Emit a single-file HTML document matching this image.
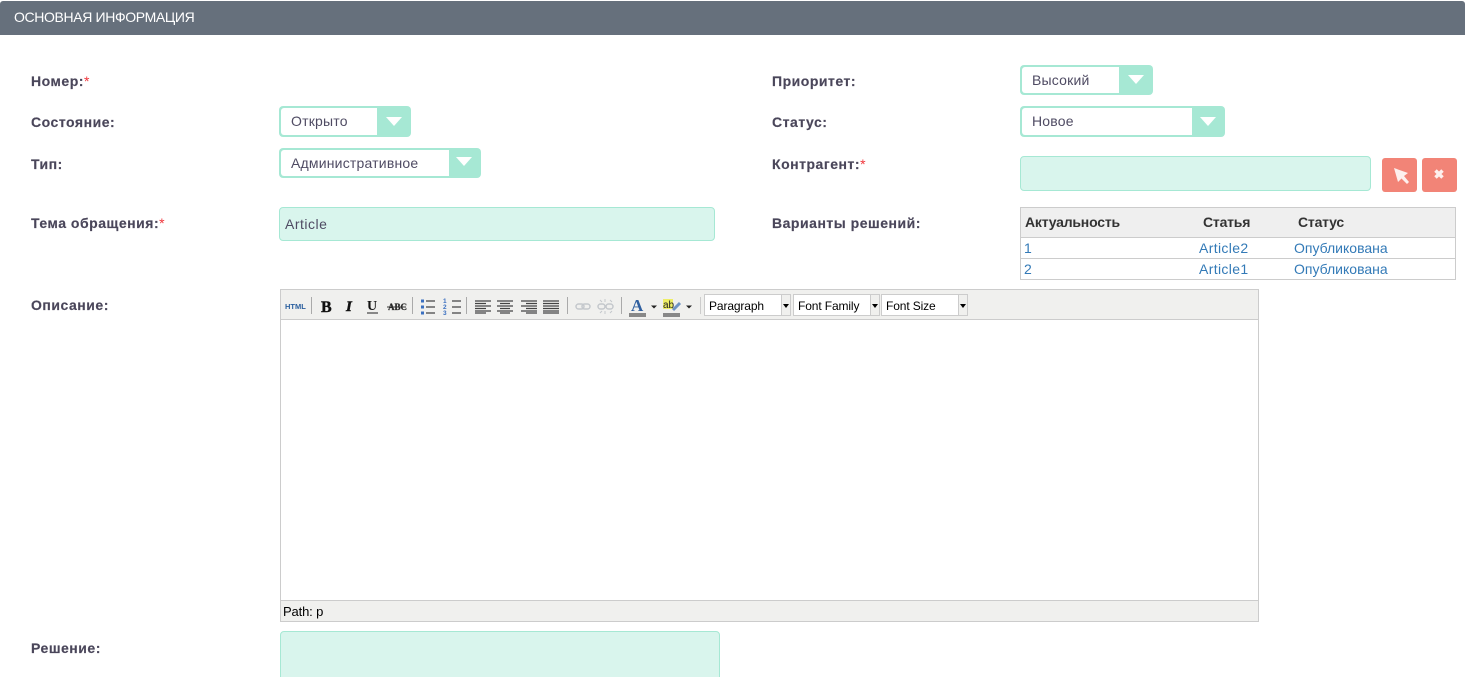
<!DOCTYPE html>
<html lang="ru"><head><meta charset="utf-8"><title>Основная информация</title>
<style>
html,body{margin:0;padding:0;background:#fff;width:1465px;height:677px;overflow:hidden}
body{position:relative;font-family:"Liberation Sans",sans-serif;font-size:14px;color:#4f4b63}
.a{position:absolute;white-space:nowrap}
.hd{left:0;top:1px;width:1465px;height:34px;background:#66707c;color:#fff;font-size:14px;line-height:33px;border-radius:3px 3px 0 0}
.hd span{margin-left:14px;letter-spacing:-.36px}
.l{font-weight:bold;font-size:14px;line-height:18px;color:#4a465a;letter-spacing:.52px;margin-top:-1px;-webkit-text-stroke:.15px #4a465a}
.l i{font-style:normal;font-weight:normal;color:#f0353b;-webkit-text-stroke:0}
.sel{box-sizing:border-box;background:#a6e8d4;border-radius:4px;height:31px}
.sel .in{position:absolute;left:2px;top:2px;bottom:2px;background:#fff;border-radius:3px 0 0 3px;line-height:26px;padding-left:10px;color:#4f4b63;letter-spacing:.2px}
.sel .ar{position:absolute;width:0;height:0;border-left:8px solid transparent;border-right:8px solid transparent;border-top:9px solid #fff;top:11px}
.inp{box-sizing:border-box;background:#d9f5ed;border:1px solid #a6e8d4;border-radius:4px}
.btn{background:#f28477;border-radius:3px;width:35px;height:34px;top:158px}
.tb{left:1020px;top:207px;width:436px;height:73px;box-sizing:border-box;border:1px solid #ccc}
.tb .h{position:absolute;left:0;top:0;right:0;height:30px;background:#efefef;border-bottom:1px solid #ccc;box-sizing:border-box}
.tb .r{position:absolute;left:0;right:0;height:1px;background:#ccc;top:50px}
.th{font-weight:bold;color:#333;line-height:18px;font-size:14px;letter-spacing:-.2px}
.td{color:#337ab7;line-height:18px;font-size:14px}
.ed{left:280px;top:289px;width:979px;height:333px;box-sizing:border-box;border:1px solid #ccc;background:#fff}
.tool{position:absolute;left:0;top:0;right:0;height:30px;background:#f0f0ee;border-bottom:1px solid #ccc;box-sizing:border-box}
.foot{position:absolute;left:0;right:0;bottom:0;height:21px;background:#f0f0ee;border-top:1px solid #ccc;box-sizing:border-box;font-size:13px;line-height:22px;color:#000;padding-left:2px;letter-spacing:-.15px}
.ms{position:absolute;top:4px;height:22px;box-sizing:border-box;background:#fff;border:1px solid #ccc;font-size:12px;line-height:23px;color:#000;padding-left:4px;letter-spacing:-.12px}
.ms b{position:absolute;right:0;top:0;bottom:0;width:8px;background:#f0f0ee;border-left:1px solid #ccc}
.ms b:after{content:"";position:absolute;left:1px;top:9px;border-left:3px solid transparent;border-right:3px solid transparent;border-top:4px solid #000}
</style></head><body>
<div class="a hd"><span>ОСНОВНАЯ ИНФОРМАЦИЯ</span></div>

<div class="a l" style="left:31px;top:73px">Номер:<i>*</i></div>
<div class="a l" style="left:31px;top:114px">Состояние:</div>
<div class="a l" style="left:31px;top:156px">Тип:</div>
<div class="a l" style="left:31px;top:215px">Тема обращения:<i>*</i></div>
<div class="a l" style="left:31px;top:297px">Описание:</div>
<div class="a l" style="left:31px;top:640px">Решение:</div>
<div class="a l" style="left:772px;top:73px">Приоритет:</div>
<div class="a l" style="left:772px;top:114px">Статус:</div>
<div class="a l" style="left:772px;top:156px">Контрагент:<i>*</i></div>
<div class="a l" style="left:772px;top:215px">Варианты решений:</div>

<div class="a sel" style="left:279px;top:106px;width:132px"><div class="in" style="width:86px">Открыто</div><div class="ar" style="left:107px"></div></div>
<div class="a sel" style="left:279px;top:148px;width:202px;height:30px"><div class="in" style="width:158px">Административное</div><div class="ar" style="left:177px;top:9px"></div></div>
<div class="a sel" style="left:1020px;top:65px;width:133px;height:30px"><div class="in" style="width:87px">Высокий</div><div class="ar" style="left:108px;top:10px"></div></div>
<div class="a sel" style="left:1020px;top:106px;width:205px"><div class="in" style="width:160px">Новое</div><div class="ar" style="left:180px"></div></div>

<div class="a inp" style="left:279px;top:207px;width:436px;height:34px;line-height:33px;padding-left:5px;letter-spacing:.5px">Article</div>
<div class="a inp" style="left:1020px;top:156px;width:351px;height:35px"></div>
<div class="a inp" style="left:280px;top:631px;width:440px;height:60px"></div>

<div class="a btn" style="left:1382px"><svg width="35" height="34"><path d="M12 10 L26 15 L22 18 L27 24 L25 26 L19.500 20.500 L16 24 Z" fill="#fdf0ee"/></svg></div>
<div class="a btn" style="left:1422px"><svg width="35" height="34"><path d="M13.500 12.500 L20.500 19.500 M20.500 12.500 L13.500 19.500" stroke="#fdf0ee" stroke-width="3.500"/></svg></div>

<div class="a tb"><div class="h"></div><div class="r"></div></div>
<div class="a th" style="left:1025px;top:213px">Актуальность</div>
<div class="a th" style="left:1203px;top:213px">Статья</div>
<div class="a th" style="left:1298px;top:213px">Статус</div>
<div class="a td" style="left:1024px;top:239px">1</div>
<div class="a td" style="left:1199px;top:239px;letter-spacing:.35px">Article2</div>
<div class="a td" style="left:1294px;top:239px">Опубликована</div>
<div class="a td" style="left:1024px;top:260px">2</div>
<div class="a td" style="left:1199px;top:260px;letter-spacing:.35px">Article1</div>
<div class="a td" style="left:1294px;top:260px">Опубликована</div>

<div class="a ed">
<div class="tool">
<svg width="430" height="30" style="position:absolute;left:0;top:0" font-family="Liberation Sans, sans-serif">
<text x="4" y="19" font-size="7.500" font-weight="bold" fill="#2b5f9e">HTML</text>
<path d="M30.500 7V24M131.500 7V24M185.500 7V24M286.500 7V24M340.500 7V24" stroke="#aaa"/>
<text x="40" y="22" font-size="16" font-weight="bold" font-family="Liberation Serif, serif" fill="#111" stroke="#111" stroke-width=".4">B</text>
<text x="65" y="21" font-size="15" font-weight="bold" font-style="italic" font-family="Liberation Serif, serif" fill="#111" stroke="#111" stroke-width=".5">I</text>
<text x="86" y="20" font-size="14" font-weight="bold" font-family="Liberation Serif, serif" fill="#111">U</text>
<path d="M86 23H97" stroke="#666" stroke-width="1.500"/>
<text x="107" y="20" font-size="9" font-weight="bold" font-family="Liberation Serif, serif" fill="#222" stroke="#222" stroke-width=".2">ABC</text>
<path d="M106 17H125" stroke="#333"/>
<path d="M140 11h3M140 17h3M140 23h3" stroke="#3a6fc0" stroke-width="3"/>
<path d="M145 11h9M145 17h9M145 23h9M171 11h9M171 17h9M171 23h9" stroke="#444" stroke-width="1.300"/>
<text x="162" y="13" font-size="6.500" font-weight="bold" fill="#3a6fc0">1</text><text x="162" y="19" font-size="6.500" font-weight="bold" fill="#3a6fc0">2</text><text x="162" y="25" font-size="6.500" font-weight="bold" fill="#3a6fc0">3</text>
<g stroke="#444" stroke-width="1.300">
<path d="M194 11h16M194 13.500h11M194 16h16M194 18.500h11M194 21h16M194 23h11"/>
<path d="M216 11h16M219 13.500h10M216 16h16M219 18.500h10M216 21h16M219 23h10"/>
<path d="M240 11h16M245 13.500h11M240 16h16M245 18.500h11M240 21h16M245 23h11"/>
<path d="M262 11h16M262 13.500h16M262 16h16M262 18.500h16M262 21h16M262 23h16"/>
</g>
<rect x="295" y="14" width="8" height="5" rx="2.500" fill="none" stroke="#c4c8cc" stroke-width="1.500"/><rect x="301" y="14" width="8" height="5" rx="2.500" fill="none" stroke="#c4c8cc" stroke-width="1.500"/>
<rect x="317" y="14" width="7" height="5" rx="2.500" fill="none" stroke="#c4c8cc" stroke-width="1.500"/><rect x="325" y="14" width="7" height="5" rx="2.500" fill="none" stroke="#c4c8cc" stroke-width="1.500"/>
<path d="M324 9v3M324 21v3M319 10l2 2M329 10l2 2M319 23l2-2M329 23l2-2" stroke="#c4c8cc"/>
<text x="350" y="21" font-size="17" font-weight="bold" font-family="Liberation Serif, serif" fill="#2f5f9f">A</text>
<rect x="348" y="23" width="17" height="4" fill="#888"/>
<path d="M370 15.500h6l-3 3z" fill="#222"/>
<rect x="382" y="9" width="10" height="10" fill="#eeee66"/>
<text x="382" y="18" font-size="10" fill="#222">ab</text>
<path d="M392 20l7-7" stroke="#6f93c4" stroke-width="3"/>
<rect x="382" y="23" width="17" height="4" fill="#888"/>
<path d="M405 15.500h6l-3 3z" fill="#222"/>
<path d="M419.500 7V24" stroke="#ccc"/>
</svg>
<div class="ms" style="left:423px;width:87px">Paragraph<b></b></div>
<div class="ms" style="left:512px;width:87px">Font Family<b></b></div>
<div class="ms" style="left:600px;width:87px">Font Size<b></b></div>
</div>
<div class="foot">Path: p</div>
</div>
</body></html>
